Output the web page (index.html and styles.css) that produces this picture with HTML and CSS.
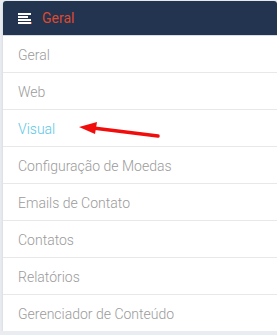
FILE: index.html
```html
<!DOCTYPE html>
<html>
<head>
<meta charset="utf-8">
<link rel="stylesheet" href="styles.css">
</head>
<body>
<div class="panel">
  <div class="panel-head">
    <span class="icon"><i class="l1"></i><i class="l2"></i><i class="l3"></i><i class="l4"></i></span>
    <span class="title">Geral</span>
  </div>
  <ul class="menu">
    <li>Geral</li>
    <li>Web</li>
    <li class="active">Visual
      <svg class="arrow" width="90" height="20" viewBox="0 0 90 20">
        <line x1="14" y1="6" x2="79" y2="14" stroke="#f20d0d" stroke-width="3.5" stroke-linecap="round"/>
        <polygon points="0,5 18,0 16,12" fill="#f20d0d"/>
      </svg>
    </li>
    <li>Configuração de Moedas</li>
    <li>Emails de Contato</li>
    <li>Contatos</li>
    <li>Relatórios</li>
    <li>Gerenciador de Conteúdo</li>
  </ul>
</div>
</body>
</html>
```
FILE: styles.css
```css
html, body {
  margin: 0;
  padding: 0;
}
body {
  background: #e9edf2;
  padding: 1px 0 0 3px;
  font-family: Roboto, "Liberation Sans", sans-serif;
}
.panel {
  background: #fff;
  border-radius: 3px 3px 0 0;
  box-shadow: 0 1px 3px rgba(0,0,0,0.12);
}
.panel-head {
  height: 34px;
  background: #22344f;
  border-radius: 3px 3px 0 0;
  border-bottom: 1px solid #d8dde3;
  display: flex;
  align-items: center;
  padding-left: 15px;
}
.icon {
  display: flex;
  flex-direction: column;
  gap: 1px;
  width: 14px;
  margin-right: 10px;
  margin-top: 1px;
}
.icon i {
  display: block;
  height: 2px;
  background: #fff;
}
.icon .l1 { width: 13px; }
.icon .l2 { width: 10px; }
.icon .l3 { width: 13px; }
.icon .l4 { width: 13px; border-right: 1px solid #d9452f; }
.title {
  color: #dc4a31;
  font-size: 14px;
}
.menu {
  list-style: none;
  margin: 0;
  padding: 0;
}
.menu li {
  height: 35px;
  padding-top: 1px;
  line-height: 36px;
  border-bottom: 1px solid #e8e8e8;
  padding-left: 15px;
  color: #9b9b9b;
  font-size: 14px;
  font-weight: 300;
  position: relative;
}
.menu li:last-child {
  border-bottom: none;
}
.menu li.active {
  color: #5bc6e6;
}
.arrow {
  position: absolute;
  left: 76px;
  top: 12px;
}
```
